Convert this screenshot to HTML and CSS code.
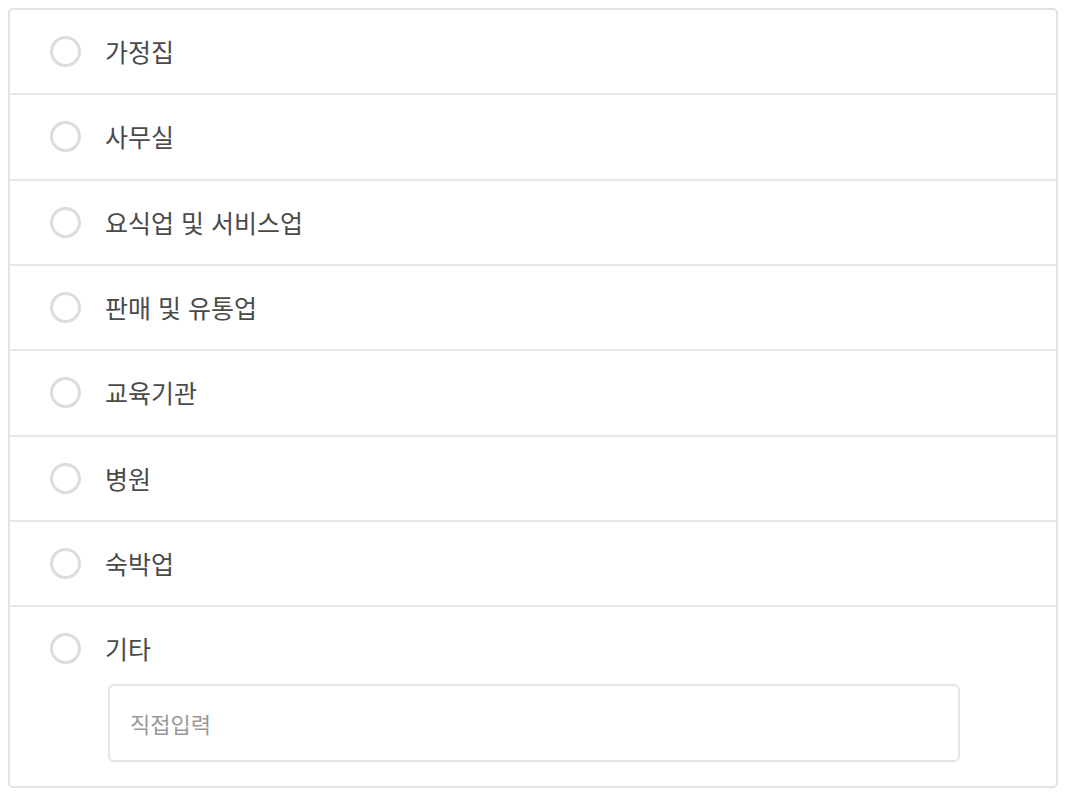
FILE: index.html
```html
<!DOCTYPE html>
<html lang="ko">
<head>
<meta charset="utf-8">
<link rel="stylesheet" href="styles.css">
</head>
<body>
<div class="list">
  <label class="row"><span class="radio"></span><span class="label">가정집</span></label>
  <label class="row"><span class="radio"></span><span class="label">사무실</span></label>
  <label class="row"><span class="radio"></span><span class="label">요식업 및 서비스업</span></label>
  <label class="row"><span class="radio"></span><span class="label">판매 및 유통업</span></label>
  <label class="row"><span class="radio"></span><span class="label">교육기관</span></label>
  <label class="row"><span class="radio"></span><span class="label">병원</span></label>
  <label class="row"><span class="radio"></span><span class="label">숙박업</span></label>
  <div class="row last">
    <label class="head"><span class="radio"></span><span class="label">기타</span></label>
    <input class="field" type="text" placeholder="직접입력">
  </div>
</div>
</body>
</html>
```
FILE: styles.css
```css
body {
  margin: 8px;
  font-family: "Noto Sans CJK KR", "Noto Sans", sans-serif;
  background: #fff;
}
.list {
  border: 2px solid #e2e2e2;
  border-radius: 5px;
  display: flex;
  flex-direction: column;
}
.row {
  display: flex;
  align-items: center;
  height: 83.33px;
  padding-left: 40px;
  border-bottom: 2px solid #e6e6e6;
  cursor: pointer;
}
.row.last {
  border-bottom: none;
  height: auto;
  flex-direction: column;
  align-items: stretch;
  padding-bottom: 24px;
}
.head {
  display: flex;
  align-items: center;
  height: 83px;
  cursor: pointer;
}
.radio {
  width: 25px;
  height: 25px;
  border: 3px solid #dcdcdc;
  border-radius: 50%;
  flex: none;
}
.label {
  margin-left: 24px;
  margin-top: -1px;
  font-size: 25px;
  color: #4a4a4a;
  line-height: 1.2;
}
.field {
  margin: -6px 96px 0 58px;
  box-sizing: border-box;
  height: 78px;
  border: 2px solid #e4e4e4;
  border-radius: 6px;
  padding: 0 20px;
  font-family: inherit;
  font-size: 22px;
  color: #444;
  outline: none;
}
.field::placeholder {
  color: #999;
}
```
